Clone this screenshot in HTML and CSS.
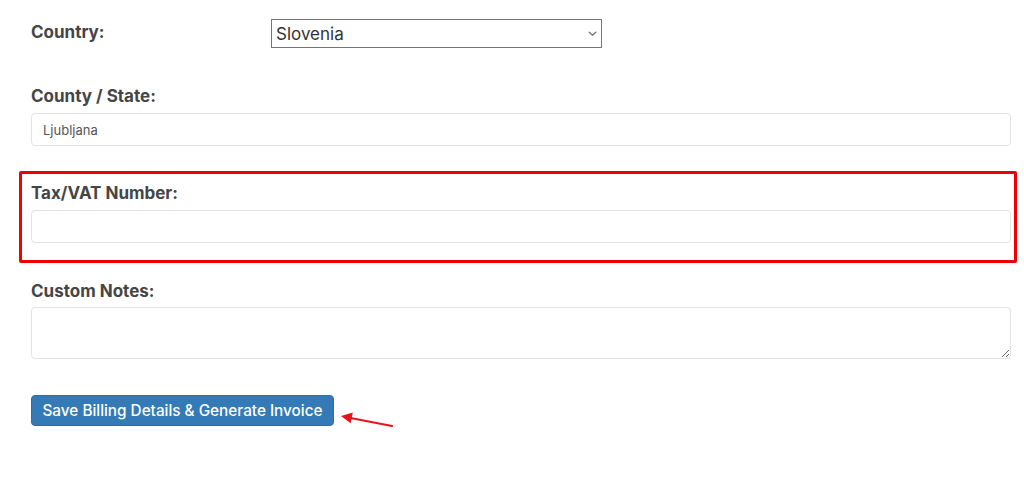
FILE: index.html
```html
<!DOCTYPE html>
<html>
<head>
<meta charset="utf-8">
<link rel="stylesheet" href="styles.css">
</head>
<body>
<form class="billing">
  <div class="row-country">
    <label class="label label-inline" for="country">Country:</label>
    <div class="select-wrap">
      <select id="country" class="select">
        <option>Slovenia</option>
      </select>
      <svg class="chevron" width="9" height="6" viewBox="0 0 9 6">
        <path d="M1.2 1.2 L4.5 4.3 L7.8 1.2" fill="none" stroke="#777777" stroke-width="1.3" stroke-linecap="round" stroke-linejoin="round"/>
      </svg>
    </div>
  </div>

  <div class="field field-county">
    <label class="label" for="county">County / State:</label>
    <input id="county" class="input" type="text" value="Ljubljana">
  </div>

  <div class="highlight">
    <div class="field">
      <label class="label" for="vat">Tax/VAT Number:</label>
      <input id="vat" class="input" type="text">
    </div>
  </div>

  <div class="field field-notes">
    <label class="label" for="notes">Custom Notes:</label>
    <textarea id="notes" class="textarea"></textarea>
  </div>

  <div class="actions">
    <button type="button" class="btn">Save Billing Details &amp; Generate Invoice</button>
    <svg class="arrow" width="60" height="24" viewBox="0 0 60 24">
      <line x1="56" y1="18" x2="12" y2="9.5" stroke="#e8141b" stroke-width="2.2" stroke-linecap="round"/>
      <polygon points="5,8 16.8,4.4 14.6,15.2" fill="#e8141b"/>
    </svg>
  </div>
</form>
</body>
</html>
```

FILE: styles.css
```css
html, body {
  margin: 0;
  padding: 0;
  background: #ffffff;
}

body {
  font-family: Inter, "Noto Sans", sans-serif;
  color: #444444;
}

.billing {
  width: 980px;
  padding: 19px 0 0 31px;
}

.row-country {
  display: flex;
  align-items: flex-start;
}

.label {
  display: block;
  font-size: 17px;
  font-weight: 700;
  line-height: 20px;
  color: #454545;
}

.label-inline {
  width: 240px;
  padding-top: 3px;
}

.select-wrap {
  position: relative;
  width: 331px;
  height: 29px;
}

.select {
  -webkit-appearance: none;
  appearance: none;
  box-sizing: border-box;
  width: 331px;
  height: 29px;
  font-family: Inter, "Noto Sans", sans-serif;
  font-size: 17px;
  color: #333333;
  border: 1px solid #767676;
  border-radius: 0;
  background: #ffffff;
  padding: 0 20px 0 4px;
  margin: 0;
  outline: none;
}

.chevron {
  position: absolute;
  right: 5px;
  top: 12px;
  pointer-events: none;
}

.field {
  display: flex;
  flex-direction: column;
  gap: 7px;
}

.field-county {
  margin-top: 38px;
}

.input {
  box-sizing: border-box;
  width: 980px;
  height: 33px;
  margin: 0;
  padding: 0 11px;
  border: 1px solid #e3e3e3;
  border-radius: 4px;
  font-family: Inter, "Noto Sans", sans-serif;
  font-size: 13px;
  color: #555555;
  background: #ffffff;
  outline: none;
}

.highlight {
  margin: 25px -6px 0 -12px;
  padding: 9px 3px 17px 9px;
  border: 3px solid #f00000;
  border-radius: 2px;
}

.field-notes {
  margin-top: 18px;
  gap: 6px;
}

.textarea {
  box-sizing: border-box;
  width: 980px;
  height: 52px;
  margin: 0;
  border: 1px solid #e3e3e3;
  border-radius: 4px;
  font-family: Inter, "Noto Sans", sans-serif;
  font-size: 13px;
  background: #ffffff;
  outline: none;
}

.actions {
  display: flex;
  align-items: flex-start;
  margin-top: 36px;
}

.btn {
  height: 31px;
  width: 303px;
  padding: 0;
  margin: 0;
  background: #337ab7;
  border: 1px solid #2e6da4;
  border-radius: 4px;
  color: #ffffff;
  font-family: Inter, "Noto Sans", sans-serif;
  font-size: 15.3px;
  font-weight: 500;
}

.arrow {
  display: block;
  margin-left: 2px;
  margin-top: 13px;
}
```
